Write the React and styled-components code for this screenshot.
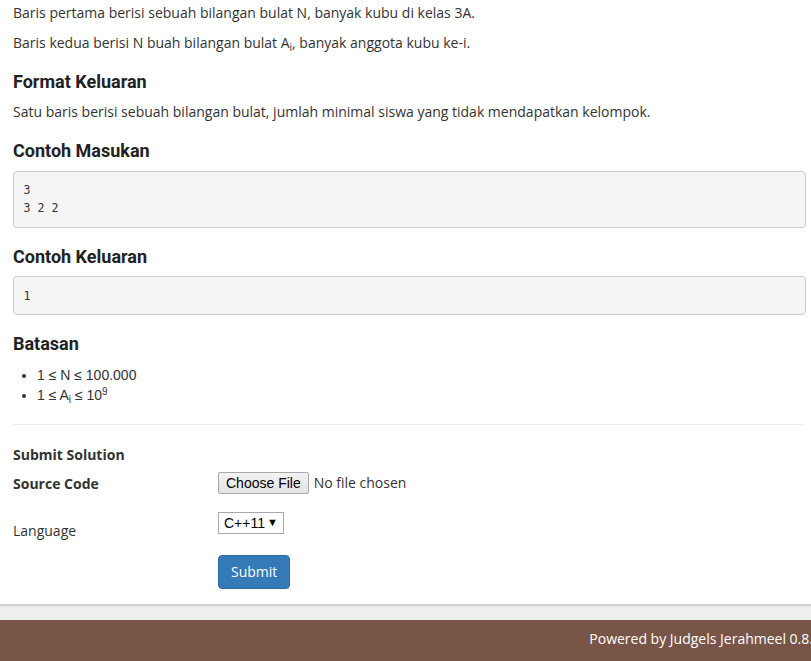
import styled, { createGlobalStyle } from 'styled-components';

const GlobalStyle = createGlobalStyle`
  html, body {
    margin: 0;
    padding: 0;
    overflow: hidden;
    background: #eeeeee;
  }
  body {
    font-family: "Open Sans", "Liberation Sans", sans-serif;
    font-size: 14px;
    line-height: 20px;
    color: #333;
  }
`;

const Page = styled.div`
  width: 826px;
`;

const Panel = styled.main`
  background: #fff;
  padding: 3px 20px 15px 13px;
  box-shadow: 0 2px 1px rgba(0, 0, 0, 0.12);
`;

const Para = styled.p`
  margin: 0 0 10px;
`;

const Heading = styled.h3`
  font-family: Roboto, "Liberation Sans", sans-serif;
  font-weight: 700;
  font-size: 18px;
  line-height: 1.1;
  color: #222;
  margin: 19px 0 10px;
`;

const Sample = styled.pre`
  margin: 0 0 10px;
  padding: 9.5px;
  background: #f5f5f5;
  border: 1px solid #ccc;
  border-radius: 4px;
  font-family: "DejaVu Sans Mono", "Liberation Mono", monospace;
  font-size: 11.6px;
  line-height: 18px;
  color: #333;
`;

const Limits = styled.ul`
  margin: 0 0 10px;
  padding: 1px 0 0 24px;
  font-family: "Liberation Sans", Arial, sans-serif;
  font-size: 14px;
  line-height: 20px;
`;

const Sup = styled.sup`
  font-size: 10px;
  line-height: 0;
  vertical-align: 5px;
`;

const Sub = styled.sub`
  font-size: 10px;
  line-height: 0;
  vertical-align: -3px;
`;

const Rule = styled.hr`
  margin: 19px 0 20px;
  border: 0;
  border-top: 1px solid #eee;
`;

const FormTitle = styled.div`
  font-weight: 700;
  margin-bottom: 9px;
`;

const FormRow = styled.div`
  display: grid;
  grid-template-columns: 205px 1fr;
  align-items: start;
  margin-top: ${(p) => p.$gap || 0}px;
`;

const Label = styled.label`
  font-weight: ${(p) => (p.$bold ? 700 : 400)};
  padding-top: ${(p) => p.$offset || 0}px;
`;

const FileField = styled.div`
  display: flex;
  align-items: center;
  gap: 5px;
  margin-top: -2px;
`;

const FileButton = styled.button`
  height: 22px;
  padding: 0 7px;
  font-family: "Liberation Sans", Arial, sans-serif;
  font-size: 14px;
  color: #000;
  background: linear-gradient(#f3f3f3, #e3e3e3);
  border: 1px solid #a9a9a9;
  border-radius: 2px;
`;

const Select = styled.div`
  display: inline-flex;
  align-items: center;
  justify-content: space-between;
  box-sizing: border-box;
  width: 66px;
  height: 22px;
  padding: 0 5px 0 5px;
  border: 1px solid #a9a9a9;
  background: #fff;
  font-family: "Liberation Sans", Arial, sans-serif;
  font-size: 14px;
  color: #000;
`;

const Caret = styled.span`
  font-size: 11px;
  line-height: 1;
  margin-top: -2px;
`;

const SubmitButton = styled.button`
  height: 34px;
  padding: 6px 12px;
  font-family: "Open Sans", "Liberation Sans", sans-serif;
  font-size: 14px;
  line-height: 20px;
  color: #fff;
  background: #337ab7;
  border: 1px solid #2e6da4;
  border-radius: 4px;
`;

const Footer = styled.footer`
  margin-top: 16px;
  background: #795548;
  color: #fff;
  padding: 9px 5px 12px 0;
  text-align: right;
`;

export default function App() {
  return (
    <Page>
      <GlobalStyle />
      <Panel>
        <Para>Baris pertama berisi sebuah bilangan bulat N, banyak kubu di kelas 3A.</Para>
        <Para>
          Baris kedua berisi N buah bilangan bulat A<Sub>i</Sub>, banyak anggota kubu ke-i.
        </Para>

        <Heading>Format Keluaran</Heading>
        <Para>Satu baris berisi sebuah bilangan bulat, jumlah minimal siswa yang tidak mendapatkan kelompok.</Para>

        <Heading>Contoh Masukan</Heading>
        <Sample>{'3\n3 2 2'}</Sample>

        <Heading>Contoh Keluaran</Heading>
        <Sample>1</Sample>

        <Heading>Batasan</Heading>
        <Limits>
          <li>1 ≤ N ≤ 100.000</li>
          <li>
            1 ≤ A<Sub>i</Sub> ≤ 10<Sup>9</Sup>
          </li>
        </Limits>

        <Rule />

        <FormTitle>Submit Solution</FormTitle>
        <FormRow>
          <Label $bold>Source Code</Label>
          <FileField>
            <FileButton type="button">Choose File</FileButton>
            <span>No file chosen</span>
          </FileField>
        </FormRow>
        <FormRow $gap={18}>
          <Label $offset={9}>Language</Label>
          <Select>
            <span>C++11</span>
            <Caret>▼</Caret>
          </Select>
        </FormRow>
        <FormRow $gap={14}>
          <span />
          <div>
            <SubmitButton type="button">Submit</SubmitButton>
          </div>
        </FormRow>
      </Panel>
      <Footer>Powered by Judgels Jerahmeel 0.8.0</Footer>
    </Page>
  );
}
